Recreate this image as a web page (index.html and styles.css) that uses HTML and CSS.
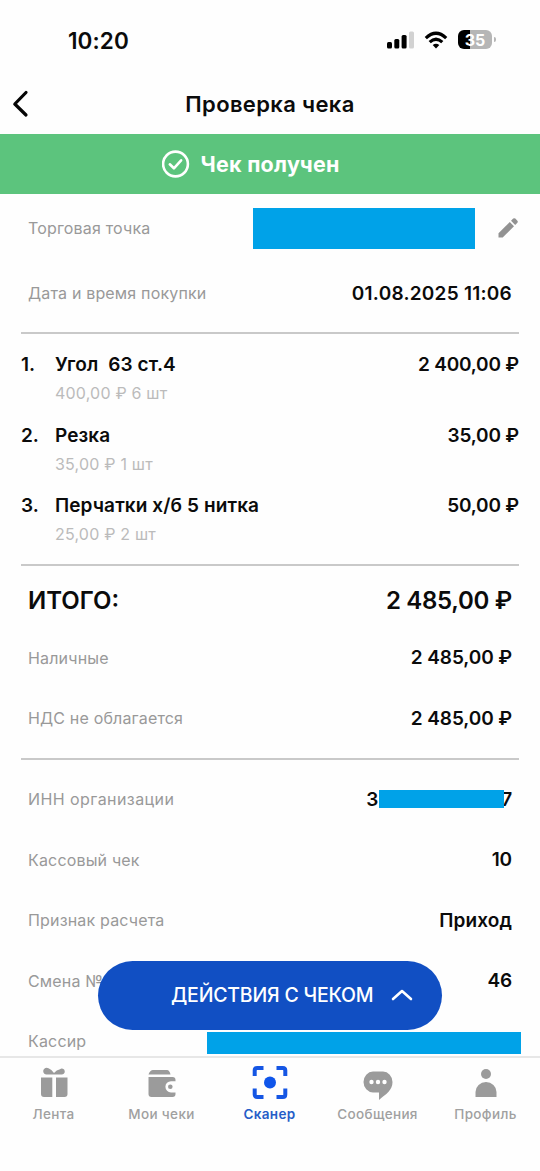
FILE: index.html
```html
<!DOCTYPE html>
<html lang="ru">
<head>
<meta charset="utf-8">
<title>Проверка чека</title>
<link rel="stylesheet" href="styles.css">
</head>
<body>
<div class="screen">
  <div class="status">
    <span class="time">10:20</span>
    <div class="indicators">
      <svg class="signal" width="27" height="18" viewBox="0 0 27 18"><rect x="0" y="11" width="5" height="6.500" rx="1.500"/><rect x="7.300" y="8" width="5" height="9.500" rx="1.500"/><rect x="14.600" y="4" width="5" height="13.500" rx="1.500"/><rect x="22" y="0.500" width="5" height="17" rx="1.500" fill="#d2d2d2"/></svg>
      <svg class="wifi" width="24" height="18" viewBox="0 0 24 18" fill="none" stroke="#000" stroke-width="3.200"><path d="M1.800 7.200Q12-2.600 22.200 7.200"/><path d="M5.700 11.200Q12 5.200 18.300 11.200"/><path d="M12 17.500l-3.300-3.400q3.300-2.500 6.600 0z" fill="#000" stroke="none"/></svg>
      <div class="battery"><span>35</span></div><i class="battery-tip"></i>
    </div>
  </div>
  <header class="header">
    <svg class="back" width="20" height="30" viewBox="0 0 20 30"><path d="M16 3.500L4.800 15L16 26" fill="none" stroke="#050505" stroke-width="3.200" stroke-linecap="round" stroke-linejoin="round"/></svg>
    <h1 class="title">Проверка чека</h1>
  </header>
  <div class="banner">
    <svg width="28" height="28" viewBox="0 0 28 28" fill="none" stroke="#fff" stroke-width="2.600" stroke-linecap="round" stroke-linejoin="round"><circle cx="13.500" cy="14" r="12.400"/><path d="M7.800 14.300l4.100 4l7.200-8"/></svg>
    <span class="banner-text">Чек получен</span>
  </div>
  <main class="receipt">
    <div class="row store"><span class="label">Торговая точка</span><span class="mask mask-store"></span>
      <svg class="pencil" width="22" height="22" viewBox="0 0 22 22" fill="#929292"><path d="M1.500 16.300L12.800 5L17 9.200L5.700 20.500H1.500z"/><path d="M14 3.800L16.200 1.600Q17.300.7 18.300 1.600L20.400 3.700Q21.400 4.700 20.400 5.800L18.200 8z"/></svg></div>
    <div class="row date"><span class="label">Дата и время покупки</span><span class="value date-value">01.08.2025 11:06</span></div>
    <hr class="rule rule-date">
    <ol class="items">
      <li class="item"><b class="num">1.</b><div class="info"><b class="name">Угол&nbsp; 63 ст.4</b><span class="sub">400,00 ₽ 6 шт</span></div><b class="price">2 400,00 ₽</b></li>
      <li class="item"><b class="num">2.</b><div class="info"><b class="name">Резка</b><span class="sub">35,00 ₽ 1 шт</span></div><b class="price">35,00 ₽</b></li>
      <li class="item"><b class="num">3.</b><div class="info"><b class="name">Перчатки х/б 5 нитка</b><span class="sub">25,00 ₽ 2 шт</span></div><b class="price">50,00 ₽</b></li>
    </ol>
    <hr class="rule">
    <div class="row total"><span>ИТОГО:</span><span class="sum">2 485,00 ₽</span></div>
    <div class="row"><span class="label">Наличные</span><span class="value">2 485,00 ₽</span></div>
    <div class="row"><span class="label">НДС не облагается</span><span class="value">2 485,00 ₽</span></div>
    <hr class="rule rule-pay">
    <div class="row inn"><span class="label inn-label">ИНН организации</span><span class="value inn-value">3<i class="mask mask-inn"></i><span class="last">7</span></span></div>
    <div class="row"><span class="label">Кассовый чек</span><span class="value">10</span></div>
    <div class="row"><span class="label">Признак расчета</span><span class="value word">Приход</span></div>
    <div class="row"><span class="label">Смена №</span><span class="value">46</span></div>
    <div class="row cashier"><span class="label">Кассир</span><span class="mask mask-cashier"></span></div>
    <button class="actions"><span>ДЕЙСТВИЯ С ЧЕКОМ</span><svg width="22" height="14" viewBox="0 0 22 14"><path d="M2 11L11 3L20 11" fill="none" stroke="#fff" stroke-width="2.600" stroke-linecap="round" stroke-linejoin="round"/></svg></button>
  </main>
  <nav class="tabs">
    <a class="tab"><svg width="36" height="36" viewBox="0 0 36 36"><path d="M5 12.500h11.300v19.500H8q-3 0-3-3zM20 12.500h11.500v16.500q0 3-3 3H20z"/><path d="M18 9.500L11 9.500A3.400 3.400 0 1 1 12.500 3.300Q15.500 4.500 18 8Q20.500 4.800 24 4.200A3 3 0 1 1 25 9.500z"/></svg><span>Лента</span></a>
    <a class="tab"><svg width="36" height="36" viewBox="0 0 36 36"><path d="M4.500 9.500Q6 5 9 5H23Q25.500 5 26.500 9.500z"/><path fill-rule="evenodd" d="M4.500 12H28.500Q31.500 12 31.500 15V16.200H27A5.600 5.600 0 0 0 27 27.400H31.500V29Q31.500 32 28.500 32H7.500Q4.500 32 4.500 29z"/><circle cx="26.300" cy="21.700" r="2.300"/></svg><span>Мои чеки</span></a>
    <a class="tab active"><svg width="36" height="36" viewBox="0 0 36 36" fill="none" stroke="#1556e4" stroke-width="4"><path d="M2.700 11V5.500Q2.700 3 5.200 3H11.500M24.500 3H30.800Q33.300 3 33.300 5.500V11M33.300 23.500V29.500Q33.300 32 30.800 32H24.500M11.500 32H5.200Q2.700 32 2.700 29.500V23.500"/><circle cx="18" cy="17.500" r="6" fill="#0f55ea" stroke="none"/></svg><span>Сканер</span></a>
    <a class="tab"><svg width="36" height="36" viewBox="0 0 36 36"><path d="M13 6.500H23A9.700 10.500 0 0 1 32.500 17C32.500 25.500 26 29 19 35V27.500H13A9.700 10.500 0 0 1 3.500 17A9.700 10.500 0 0 1 13 6.500z"/><g fill="#fff"><circle cx="11.500" cy="17" r="2.200"/><circle cx="18" cy="17" r="2.200"/><circle cx="24.500" cy="17" r="2.200"/></g></svg><span>Сообщения</span></a>
    <a class="tab"><svg width="36" height="36" viewBox="0 0 36 36"><circle cx="18" cy="9" r="5"/><path d="M7.500 32V27A10.500 10 0 0 1 28.500 27V32z"/></svg><span>Профиль</span></a>
  </nav>
</div>
</body>
</html>
```
FILE: styles.css
```css
* { box-sizing: border-box; }
body { margin: 0; background: #fff; color: #0b0b0b; font-family: Inter, "Liberation Sans", sans-serif; }
.screen { width: 540px; height: 1171px; display: flex; flex-direction: column; overflow: hidden; background: #fefefe; }
.status { height: 74px; flex: none; display: flex; justify-content: space-between; padding: 27px 44px 0 68px; }
.time { font-size: 22.5px; line-height: 27px; font-weight: 600; letter-spacing: .1px; }
.indicators { display: flex; align-items: flex-start; padding-top: 3px; }
.signal { margin-top: 1px; }
.wifi { margin: 1px 10px 0 10px; }
.battery { width: 34px; height: 19px; border-radius: 6px; background: linear-gradient(90deg, #000 12px, #b6b6b6 12px); color: #fff; text-align: center; font-size: 16px; line-height: 20px; font-weight: 700; }
.battery-tip { width: 2px; height: 5px; margin: 7px 0 0 2px; border-radius: 0 2px 2px 0; background: #b6b6b6; }
.header { height: 60px; flex: none; display: grid; grid-template-columns: 40px 1fr 40px; align-items: center; }
.back { margin-left: 10px; }
.title { margin: 0; text-align: center; font-size: 22px; line-height: 30px; font-weight: 600; letter-spacing: .35px; }
.banner { height: 60px; flex: none; display: flex; align-items: center; padding-left: 162px; gap: 10.5px; background: #5cc47d; color: #fff; }
.banner-text { font-size: 21.5px; font-weight: 700; letter-spacing: .25px; }
.receipt { position: relative; height: 862px; flex: none; overflow: hidden; padding: 0 21px; }
.row { height: 60.5px; padding: 0 7px; display: flex; align-items: center; justify-content: space-between; }
.label { font-size: 16px; letter-spacing: .17px; color: #999; }
.value { font-size: 19px; font-weight: 600; letter-spacing: -.1px; }
.word { letter-spacing: .1px; }
.mask { display: block; background: #00a2e8; }
.store { height: 68px; padding-right: 0; justify-content: flex-start; }
.mask-store { width: 222px; height: 41px; margin-left: auto; }
.pencil { margin-left: 22px; }
.date { height: 62px; }
.date-value { letter-spacing: .25px; }
.rule { height: 2px; margin: 0; border: 0; background: #c9c9c9; }
.rule-date { margin-top: 8px; }
.items { list-style: none; margin: 0; padding: 17px 0 1.5px; }
.item { height: 70.5px; display: flex; font-size: 19px; line-height: 28px; }
.item b { font-weight: 600; }
.num { width: 34px; }
.info { flex: 1; display: flex; flex-direction: column; }
.name { letter-spacing: .1px; }
.price { letter-spacing: -.2px; }
.sub { font-size: 16px; letter-spacing: .2px; color: #bbb; }
.total { height: 54px; margin-top: 7.5px; font-size: 24px; font-weight: 600; }
.sum { letter-spacing: -.3px; }
.rule-pay { margin-top: 9px; }
.inn { margin-top: 9.5px; }
.inn-label { letter-spacing: .42px; }
.inn-value { display: flex; align-items: center; }
.mask-inn { width: 125px; height: 18px; margin-left: 1px; z-index: 1; }
.last { margin-left: -3px; }
.cashier { padding-right: 0; }
.mask-cashier { width: 314px; height: 22px; margin: 3px -2px 0 0; }
.actions { position: absolute; left: 98px; top: 767px; width: 344px; height: 69px; padding: 0 29px 1px 73px; border: 0; border-radius: 35px; background: #114fc3; color: #fff; display: flex; align-items: center; justify-content: space-between; font: 500 19.5px Inter, sans-serif; letter-spacing: -.2px; white-space: nowrap; }
.tabs { height: 115px; border-top: 2px solid #e7e7e7; display: grid; grid-template-columns: repeat(5, 108px); }
.tab { display: flex; flex-direction: column; align-items: center; padding: 7px 1px 0 0; font-size: 13.5px; letter-spacing: .35px; line-height: 24px; color: #a0a0a0; fill: #9b9b9b; font-weight: 500; }
.tab span { margin-top: 1px; }
.active { color: #255dc8; font-weight: 600; }
```
